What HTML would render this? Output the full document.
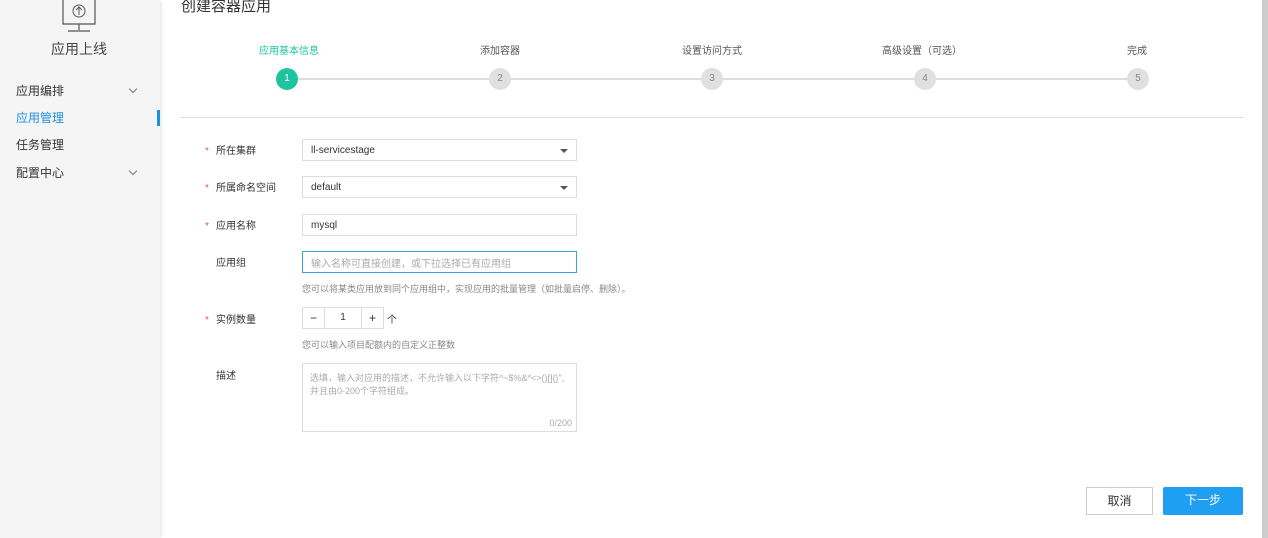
<!DOCTYPE html>
<html><head><meta charset="utf-8"><style>
*{margin:0;padding:0;box-sizing:border-box}
body{width:1268px;height:538px;overflow:hidden;background:#fff;font-family:"Liberation Sans","Noto Sans CJK SC",sans-serif;color:#333;position:relative;font-size:12px}
.abs{position:absolute}
.side{left:0;top:0;width:160px;height:538px;background:#f5f5f5;box-shadow:1px 0 4px rgba(0,0,0,.12)}
.nav{left:16px;font-size:12px;color:#333}
.chev{left:130px;width:6px;height:6px;border-right:1px solid #777;border-bottom:1px solid #777;transform:rotate(45deg)}
.lab{font-size:10px;color:#555;transform:translateX(-50%);white-space:nowrap}
.dot{width:22px;height:22px;border-radius:50%;background:#e0e0e0;color:#888;font-size:10px;text-align:center;line-height:22px;transform:translate(-50%,-50%)}
.fl{left:216px;font-size:10px;color:#333}
.star{left:205px;color:#e85555;font-size:10px}
.inp{left:302px;width:275px;height:22px;border:1px solid #ddd;font-size:10px;padding-left:8px;color:#333;display:flex;align-items:center}
.caret{right:8px;top:9px;border-left:4px solid transparent;border-right:4px solid transparent;border-top:4px solid #555}
.hint{left:302px;font-size:9px;color:#888}
</style></head><body>
<div class="abs side">
 <svg class="abs" style="left:60px;top:0" width="38" height="34" viewBox="0 0 38 34"><path d="M3 0V24H35V0" fill="none" stroke="#555" stroke-width="1.2"/><path d="M19 24V30M8 31H30" stroke="#555" stroke-width="1.2"/><circle cx="19" cy="11" r="6" fill="none" stroke="#555"/><path d="M19 15V7M16 10L19 7L22 10" fill="none" stroke="#555"/></svg>
 <div class="abs" style="left:51px;top:39px;font-size:14px;color:#444">应用上线</div>
 <div class="abs nav" style="top:82px">应用编排</div><div class="abs chev" style="top:86px"></div>
 <div class="abs nav" style="top:109px;color:#1e8fe1">应用管理</div>
 <div class="abs nav" style="top:136px">任务管理</div>
 <div class="abs nav" style="top:164px">配置中心</div><div class="abs chev" style="top:168px"></div>
 <div class="abs" style="left:157px;top:110px;width:3px;height:16px;background:#1e8fe1"></div>
</div>
<div class="abs" style="left:181px;top:-5px;font-size:15px;color:#333">创建容器应用</div>
<div class="abs" style="left:287px;top:78px;width:851px;height:2px;background:#ddd"></div>
<div class="abs lab" style="left:289px;top:42px;color:#1ec3a0">应用基本信息</div>
<div class="abs lab" style="left:500px;top:42px">添加容器</div>
<div class="abs lab" style="left:712px;top:42px">设置访问方式</div>
<div class="abs lab" style="left:922px;top:42px">高级设置（可选）</div>
<div class="abs lab" style="left:1137px;top:42px">完成</div>
<div class="abs dot" style="left:287px;top:79px;background:#1ec3a0;color:#fff">1</div>
<div class="abs dot" style="left:500px;top:79px">2</div>
<div class="abs dot" style="left:712px;top:79px">3</div>
<div class="abs dot" style="left:925px;top:79px">4</div>
<div class="abs dot" style="left:1138px;top:79px">5</div>
<div class="abs" style="left:181px;top:117px;width:1062px;height:1px;background:#ddd"></div>

<div class="abs star" style="top:146px">*</div><div class="abs fl" style="top:142px">所在集群</div>
<div class="abs inp" style="top:139px">ll-servicestage<div class="abs caret"></div></div>
<div class="abs star" style="top:183px">*</div><div class="abs fl" style="top:179px">所属命名空间</div>
<div class="abs inp" style="top:176px">default<div class="abs caret"></div></div>
<div class="abs star" style="top:221px">*</div><div class="abs fl" style="top:217px">应用名称</div>
<div class="abs inp" style="top:214px">mysql</div>
<div class="abs fl" style="top:254px">应用组</div>
<div class="abs inp" style="top:251px;border-color:#3aa0e8;color:#aaa">输入名称可直接创建，或下拉选择已有应用组</div>
<div class="abs hint" style="top:282px">您可以将某类应用放到同个应用组中，实现应用的批量管理（如批量启停、删除）。</div>
<div class="abs star" style="top:315px">*</div><div class="abs fl" style="top:311px">实例数量</div>
<div class="abs" style="left:302px;top:307px;width:82px;height:22px;border:1px solid #ddd;font-size:12px;display:flex">
 <div style="width:22px;text-align:center;border-right:1px solid #ddd;line-height:20px">−</div>
 <div style="width:37px;text-align:center;border-right:1px solid #ddd;line-height:20px;font-size:10px">1</div>
 <div style="width:21px;text-align:center;line-height:20px">+</div></div>
<div class="abs" style="left:387px;top:311px;font-size:10px">个</div>
<div class="abs hint" style="top:338px">您可以输入项目配额内的自定义正整数</div>
<div class="abs fl" style="top:367px">描述</div>
<div class="abs" style="left:302px;top:363px;width:275px;height:69px;border:1px solid #ddd;font-size:9px;color:#aaa;padding:8px 7px;line-height:13px">选填，输入对应用的描述，不允许输入以下字符^~$%&amp;*&lt;&gt;()[]{}",并且由0-200个字符组成。
<div class="abs" style="right:4px;bottom:1px;font-size:9px">0/200</div></div>

<div class="abs" style="left:1086px;top:487px;width:67px;height:28px;border:1px solid #ccc;font-size:12px;text-align:center;line-height:26px">取消</div>
<div class="abs" style="left:1163px;top:487px;width:80px;height:28px;background:#1e9ff2;color:#fff;font-size:12px;text-align:center;line-height:26px;border-radius:2px">下一步</div>
<div class="abs" style="left:1262px;top:0;width:6px;height:538px;background:#ccc"></div>
</body></html>
